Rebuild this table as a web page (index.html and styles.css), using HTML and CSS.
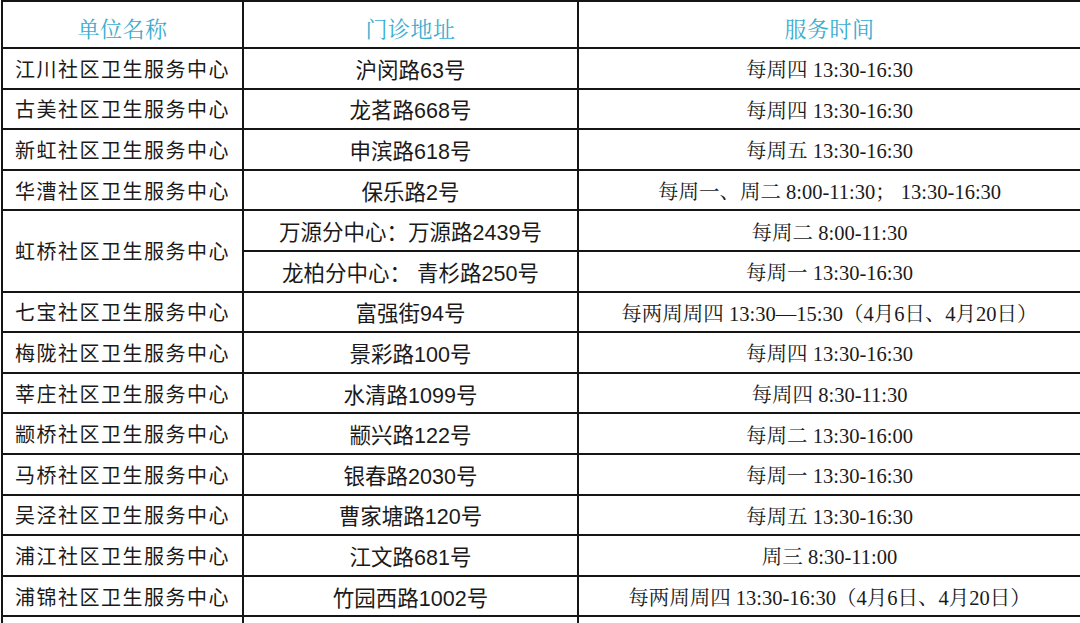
FILE: index.html
```html
<!DOCTYPE html>
<html lang="zh">
<head>
<meta charset="utf-8">
<link rel="stylesheet" href="styles.css">
</head>
<body>
<table class="sched">
  <colgroup>
    <col class="c1"><col class="c2"><col class="c3">
  </colgroup>
  <thead>
    <tr class="head"><th>单位名称</th><th>门诊地址</th><th>服务时间</th></tr>
  </thead>
  <tbody>
    <tr><td class="name">江川社区卫生服务中心</td><td class="addr">沪闵路63号</td><td class="time">每周四 13:30-16:30</td></tr>
    <tr><td class="name">古美社区卫生服务中心</td><td class="addr">龙茗路668号</td><td class="time">每周四 13:30-16:30</td></tr>
    <tr><td class="name">新虹社区卫生服务中心</td><td class="addr">申滨路618号</td><td class="time">每周五 13:30-16:30</td></tr>
    <tr><td class="name">华漕社区卫生服务中心</td><td class="addr">保乐路2号</td><td class="time">每周一、周二 8:00-11:30；&nbsp;13:30-16:30</td></tr>
    <tr><td class="name" rowspan="2">虹桥社区卫生服务中心</td><td class="addr">万源分中心：万源路2439号</td><td class="time">每周二 8:00-11:30</td></tr>
    <tr><td class="addr">龙柏分中心：&nbsp;青杉路250号</td><td class="time">每周一 13:30-16:30</td></tr>
    <tr><td class="name">七宝社区卫生服务中心</td><td class="addr">富强街94号</td><td class="time">每两周周四 13:30—15:30（4月6日、4月20日）</td></tr>
    <tr><td class="name">梅陇社区卫生服务中心</td><td class="addr">景彩路100号</td><td class="time">每周四 13:30-16:30</td></tr>
    <tr><td class="name">莘庄社区卫生服务中心</td><td class="addr">水清路1099号</td><td class="time">每周四 8:30-11:30</td></tr>
    <tr><td class="name">颛桥社区卫生服务中心</td><td class="addr">颛兴路122号</td><td class="time">每周二 13:30-16:00</td></tr>
    <tr><td class="name">马桥社区卫生服务中心</td><td class="addr">银春路2030号</td><td class="time">每周一 13:30-16:30</td></tr>
    <tr><td class="name">吴泾社区卫生服务中心</td><td class="addr">曹家塘路120号</td><td class="time">每周五 13:30-16:30</td></tr>
    <tr><td class="name">浦江社区卫生服务中心</td><td class="addr">江文路681号</td><td class="time">周三 8:30-11:00</td></tr>
    <tr><td class="name">浦锦社区卫生服务中心</td><td class="addr">竹园西路1002号</td><td class="time">每两周周四 13:30-16:30（4月6日、4月20日）</td></tr>
    <tr><td class="name">&nbsp;</td><td class="addr">&nbsp;</td><td class="time">&nbsp;</td></tr>
  </tbody>
</table>
</body>
</html>
```

FILE: styles.css
```css
html, body {
  margin: 0;
  padding: 0;
  background: #ffffff;
  overflow: hidden;
}

.sched {
  border-collapse: collapse;
  table-layout: fixed;
  width: 1079px;
  margin: 0 0 0 1px;
  color: #1a1a1a;
}

.c1 { width: 241px; }
.c2 { width: 335px; }
.c3 { width: 503px; }

.sched th,
.sched td {
  border: 2px solid #151515;
  padding: 0;
  text-align: center;
  vertical-align: middle;
  white-space: nowrap;
  overflow: hidden;
}

.head th {
  height: 47px;
  padding-top: 5px;
  box-sizing: border-box;
  font-family: "Noto Serif CJK SC", "Liberation Serif", "Noto Sans CJK SC", serif;
  font-weight: normal;
  font-size: 22px;
  color: #3aaed1;
  letter-spacing: 0.5px;
}

.sched tbody tr {
  height: 40.6px;
}

.name {
  font-family: "Noto Sans CJK SC", "Liberation Sans", sans-serif;
  font-size: 20px;
  letter-spacing: 1.5px;
}

.addr {
  font-family: "Liberation Sans", "Noto Sans CJK SC", sans-serif;
  font-size: 21.5px;
}

.time {
  font-family: "Liberation Serif", "Noto Serif CJK SC", "Noto Sans CJK SC", serif;
  font-size: 20.5px;
}
```
